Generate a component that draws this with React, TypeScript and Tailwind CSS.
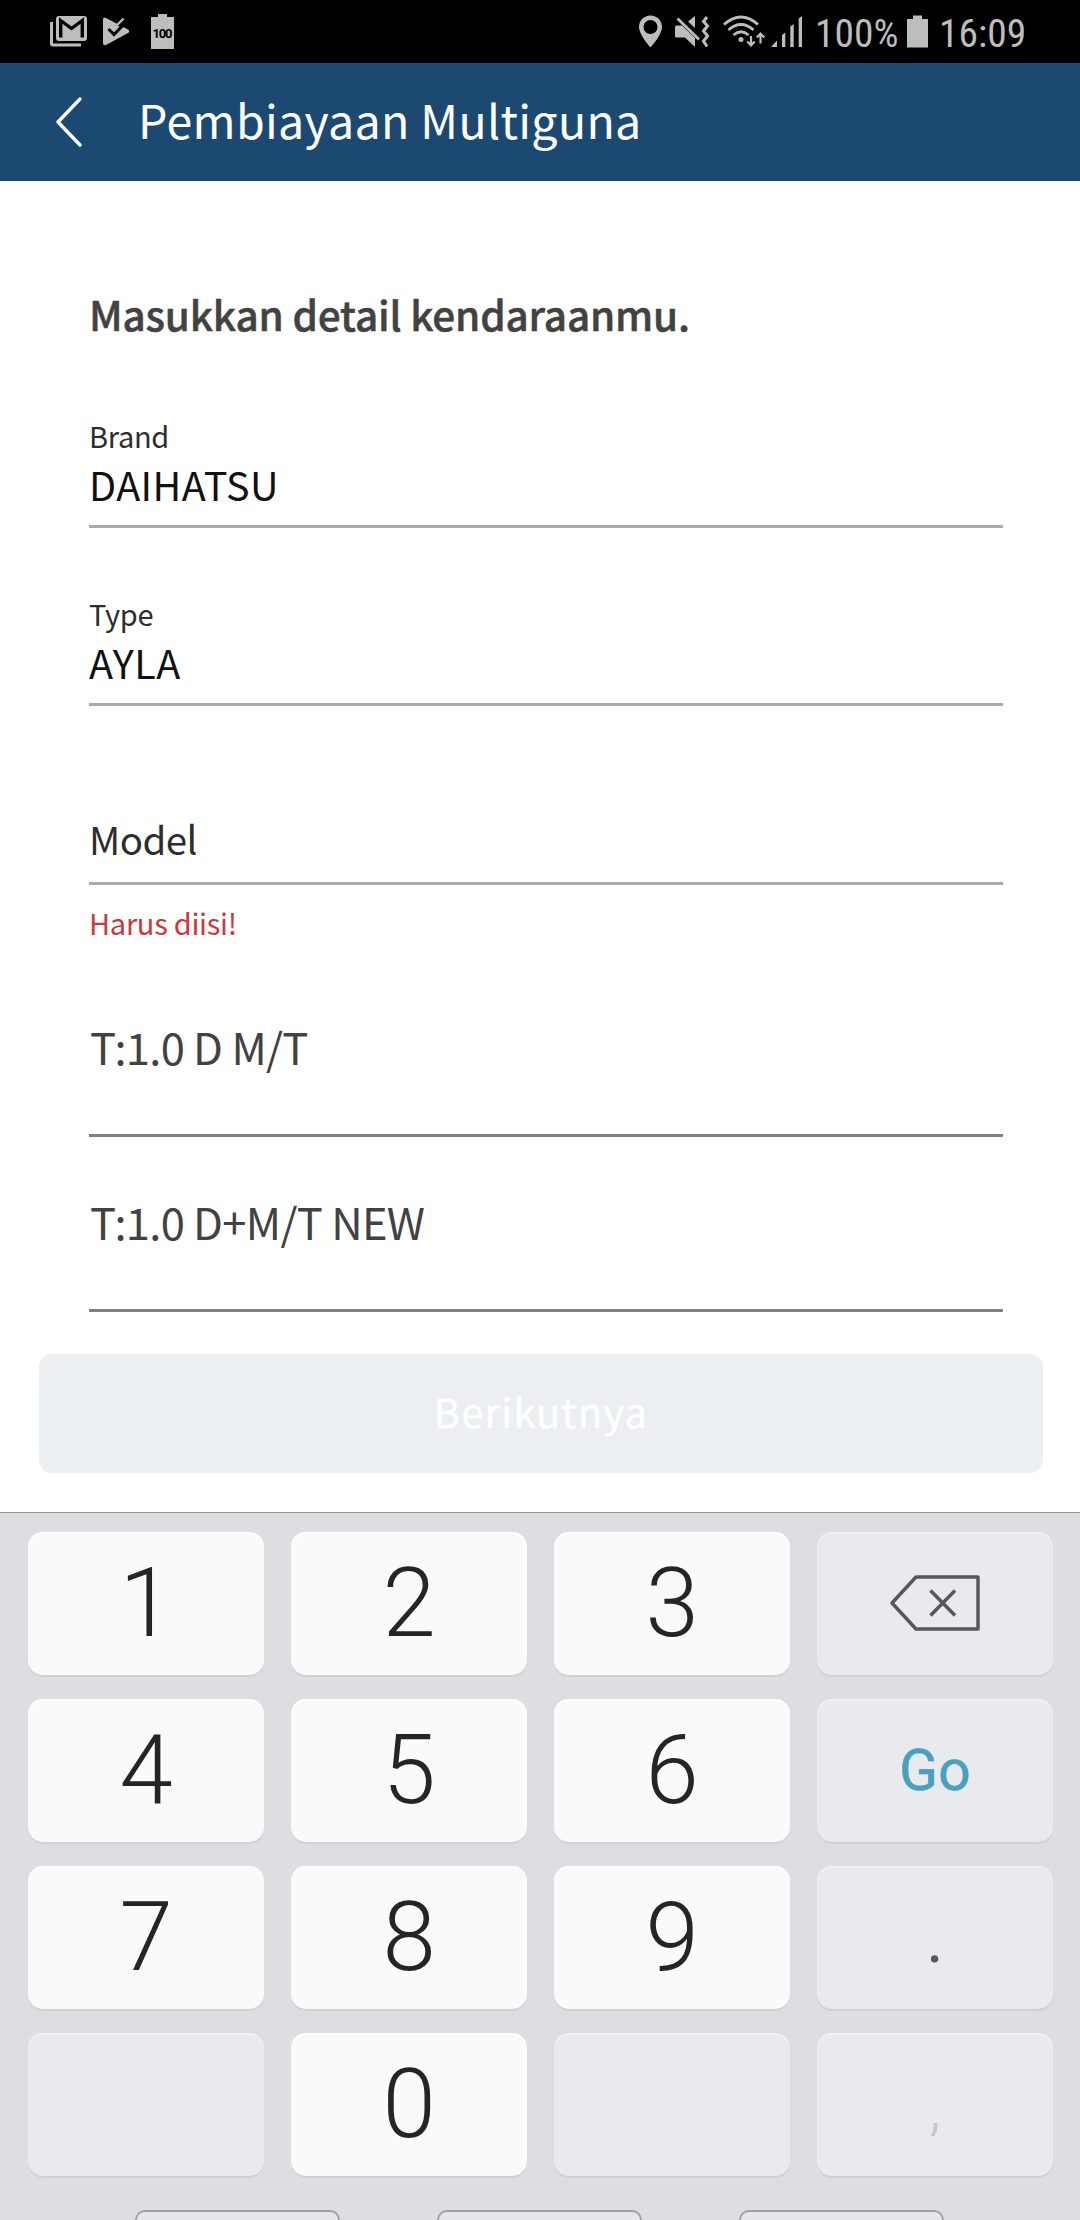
import React from "react";

const cjk = "font-['Noto_Sans_CJK_SC',sans-serif]";

function StatusBar() {
  return (
    <div className="flex h-[63px] shrink-0 items-center bg-black pl-[49px] text-[#bdbdbd]">
      <svg className="h-[63px] w-[130px] shrink-0" viewBox="49 0 130 63" fill="none">
        <path d="M50 22h3v21.500h28v3H53q-3 0-3-3z" fill="#bdbdbd" />
        <rect x="56" y="16" width="31" height="25" rx="3" fill="#bdbdbd" />
        <path d="M60.700 37.500V20.500L71.500 28.500L82.300 20.500V37.500" stroke="#000" strokeWidth="3.400" />
        <path d="M103 19.500q0-3 3-1.500L128 29.500q2.500 2 0 3.500L106 45q-3 1-3-2z" fill="#bdbdbd" />
        <path d="M117 26l7-9 8 4v7l-7-1z" fill="#000" />
        <path d="M112 24.800l2.300 3.200L123.500 18.500" stroke="#bdbdbd" strokeWidth="2.400" />
        <path d="M108.500 29l5.500 5.500L126 22" stroke="#000" strokeWidth="3" />
        <path d="M151 17h7v-3h9v3h7v32h-23z" fill="#bdbdbd" />
        <text x="162.500" y="38.300" textAnchor="middle" fontSize="13" fontWeight="700" fontFamily="Roboto, sans-serif" fill="#000" textLength="20">100</text>
      </svg>
      <svg className="ml-[458px] h-[63px] w-[168px] shrink-0" viewBox="637 0 168 63" fill="none">
        <path fillRule="evenodd" d="M650.500 15.500c-6.500 0-11.500 5-11.500 11.500 0 8 11.500 20.500 11.500 20.500S662 35 662 27c0-6.500-5-11.500-11.500-11.500zm0 4.500a7 7 0 1 1 0 14 7 7 0 0 1 0-14z" fill="#bdbdbd" />
        <path d="M675 27q0-1.500 1.500-1.500H682L695 38v9l-10-9.500h-8.500Q675 37.500 675 36zM688 21.500l7-5.500v12z" fill="#bdbdbd" />
        <path d="M677.500 18.500L699 39.500" stroke="#bdbdbd" strokeWidth="2.800" />
        <path d="M707 17l-3.500 4.500 4 4.500-4 5 4 5-4 5 3.500 5.500" stroke="#bdbdbd" strokeWidth="3" />
        <path d="M724 24.500Q741 9.500 758 24.500M728.500 30Q741 19 753.500 30M733.500 35Q741 28.500 748.500 35" stroke="#bdbdbd" strokeWidth="2.800" />
        <circle cx="741" cy="39.500" r="2.500" fill="#bdbdbd" />
        <path d="M751 36v9.500M747.300 41.500l3.700 4 3.700-4M760.500 43.500v-10M756.800 37.500l3.700-4 3.700 4" stroke="#bdbdbd" strokeWidth="2.200" />
        <path d="M771 47l6-6.500V47zM782 35l3.300-2.500V47H782zM790.300 26.500l3.400-2.500v23h-3.400zM798.700 18.500l3.300-2.500v31h-3.300z" fill="#bdbdbd" />
      </svg>
      <span className="ml-[10px] w-[80px] pt-[3px] font-['Roboto_Condensed',Roboto,sans-serif] text-[39.500px] leading-[63px] [font-stretch:75%]">100%</span>
      <svg className="ml-[12px] h-[63px] w-[21px] shrink-0" viewBox="0 0 21 63">
        <path d="M6 15.500h9V19h6v28.500H0V19h6z" fill="#bdbdbd" />
      </svg>
      <span className="ml-[11px] pt-[3px] font-['Roboto_Condensed',Roboto,sans-serif] text-[39.500px] leading-[63px] [font-stretch:75%]">16:09</span>
    </div>
  );
}

function Field({ label, value }: { label: string; value: string }) {
  return (
    <div className="border-b-3 border-[#aaaaaa] pb-[13px]">
      <div className="text-[29px] leading-[40px] tracking-[-0.3px] text-[#2d2d2d]">{label}</div>
      <div className="mt-px text-[39.500px] leading-[56px] tracking-[0.4px] text-[#111111]">{value}</div>
    </div>
  );
}

function Option({ text }: { text: string }) {
  return (
    <div className="border-b-3 border-[#808080] pt-px pb-[57px] pl-px text-[43.500px] leading-[60px] tracking-[-0.7px] text-[#424242]">
      {text}
    </div>
  );
}

function Key({ light, children }: { light?: boolean; children?: React.ReactNode }) {
  return (
    <div
      className={
        "flex h-[143px] items-center justify-center rounded-[15px] font-[Roboto,sans-serif] " +
        (light
          ? "bg-[#fafafa] pb-[2px] text-[96px] font-light text-[#252525] shadow-[inset_0_2px_1px_#ffffff,0_2px_1px_#d0d1d5]"
          : "bg-[#e9eaee] shadow-[inset_0_2px_1px_#f0f1f4,0_2px_1px_#d0d1d5]")
      }
    >
      {children}
    </div>
  );
}

export default function App() {
  return (
    <div className={"flex h-[2220px] w-[1080px] flex-col overflow-hidden bg-white " + cjk}>
      <StatusBar />
      <header className="flex h-[118px] shrink-0 items-center bg-[#1c4971] pl-[54px] text-white">
        <svg className="h-[54px] w-[30px]" viewBox="0 0 30 54" fill="none" stroke="#fff" strokeWidth="3.400" strokeLinecap="round" strokeLinejoin="round">
          <path d="M26 4L4 27L26 50" />
        </svg>
        <h1 className="ml-[54px] pb-[6px] text-[46.500px] tracking-[0.3px]">Pembiayaan Multiguna</h1>
      </header>
      <main className="shrink-0 pr-[77px] pl-[89px]">
        <h2 className="mt-[103px] text-[40.500px] leading-[60px] font-medium tracking-[-0.2px] text-[#424242] [-webkit-text-stroke:0.500px_#424242]">
          Masukkan detail kendaraanmu.
        </h2>
        <div className="mt-[71px] flex flex-col gap-[65px]">
          <Field label="Brand" value="DAIHATSU" />
          <Field label="Type" value="AYLA" />
        </div>
        <div className="mt-[104px] border-b-3 border-[#aaaaaa] pb-[16px] text-[38.500px] leading-[56px] tracking-[-0.6px] text-[#2d2d2d]">
          Model
        </div>
        <div className="mt-[17px] text-[29px] leading-[40px] tracking-[-0.28px] text-[#c73a3a]">Harus diisi!</div>
        <div className="mt-[74px] flex flex-col gap-[54px]">
          <Option text="T:1.0 D M/T" />
          <Option text="T:1.0 D+M/T NEW" />
        </div>
      </main>
      <button className="mt-[42px] mr-[37px] mb-[39px] ml-[39px] h-[119px] shrink-0 rounded-[13px] bg-[#ebeff2] pb-[5px] text-[40px] tracking-[1.200px] text-white [-webkit-text-stroke:0.300px_#ffffff]">
        Berikutnya
      </button>
      <section className="flex-1 border-t border-[#949596] bg-[#dddee2] pt-[19px]">
        <div className="ml-[28px] grid w-[1025px] grid-cols-4 gap-x-[27px] gap-y-[24px]">
          <Key light>1</Key>
          <Key light>2</Key>
          <Key light>3</Key>
          <Key>
            <svg className="h-[57px] w-[92px]" viewBox="0 0 92 57" fill="none" stroke="#585858" strokeWidth="3.500" strokeLinejoin="round">
              <path d="M3 28L27 2H89V54H27zM41.500 15.500L66 40.500M66 15.500L41.500 40.500" />
            </svg>
          </Key>
          <Key light>4</Key>
          <Key light>5</Key>
          <Key light>6</Key>
          <Key>
            <span className="text-[57px] text-[#4aa0c0] [-webkit-text-stroke:0.600px_#4aa0c0]">Go</span>
          </Key>
          <Key light>7</Key>
          <Key light>8</Key>
          <Key light>9</Key>
          <Key>
            <span className="pt-[3px] text-[66px] text-[#585858]">.</span>
          </Key>
          <Key />
          <Key light>0</Key>
          <Key />
          <Key>
            <span className="pt-[6px] text-[62px] font-light text-[#c6c7c9]">,</span>
          </Key>
        </div>
        <div className="mt-[34px] ml-[135px] flex gap-[97px]">
          <div className="h-[40px] w-[205px] rounded-[10px] border-2 border-[#a0a1a3] bg-[#e6e7ea]" />
          <div className="h-[40px] w-[205px] rounded-[10px] border-2 border-[#a0a1a3] bg-[#e6e7ea]" />
          <div className="h-[40px] w-[205px] rounded-[10px] border-2 border-[#a0a1a3] bg-[#e6e7ea]" />
        </div>
      </section>
    </div>
  );
}
